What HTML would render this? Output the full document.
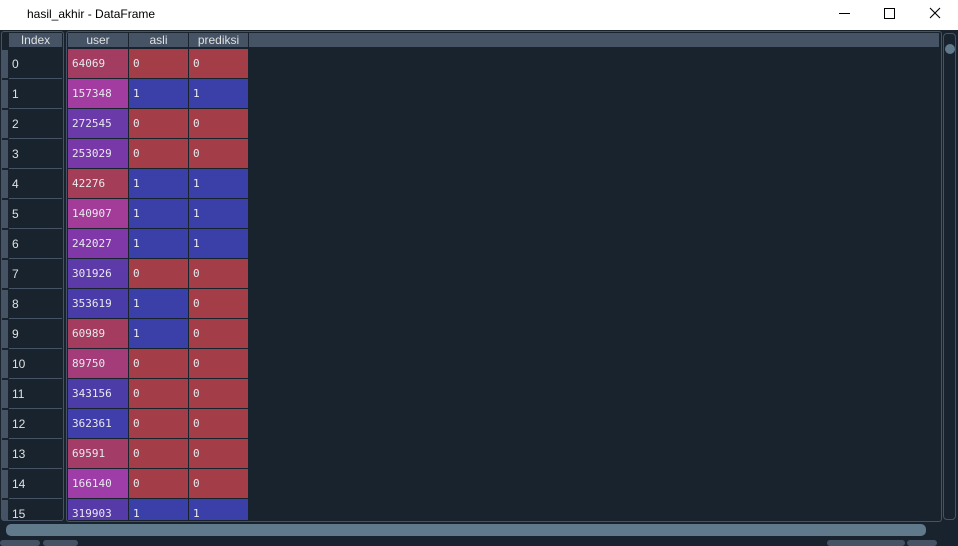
<!DOCTYPE html><html><head><style>
body{margin:0;width:958px;height:546px;background:#19232d;position:relative;overflow:hidden;font-family:"Liberation Sans",sans-serif}
.t{position:absolute;left:0;top:0;width:958px;height:30px;background:#fff}
.t span{position:absolute;left:27px;top:7px;font-size:12px;color:#000}
.a{position:absolute}
.h{position:absolute;top:33px;height:14px;background:#455364;color:#dfe1e2;font-size:12px;text-align:center;line-height:14px}
.c{position:absolute;height:29px;font-family:"DejaVu Sans Mono","Liberation Mono",monospace;font-size:11px;color:#e8e8ee;line-height:29px;padding-left:4px;box-sizing:border-box}
.i{position:absolute;left:9px;width:53px;height:29px;border-bottom:1px solid #455364;color:#dfe1e2;font-size:12px;line-height:30px;padding-left:3px;box-sizing:border-box}
.ib{position:absolute;left:2px;width:6px;height:28px;background:#455364}
</style></head><body>
<div class="t"><span>hasil_akhir - DataFrame</span>
<div class="a" style="left:839px;top:13px;width:11px;height:1px;background:#000"></div>
<div class="a" style="left:884px;top:8px;width:9px;height:9px;border:1px solid #000"></div>
<svg class="a" style="left:929px;top:7px" width="12" height="12"><path d="M1 1L11 11M11 1L1 11" stroke="#000" stroke-width="1.1"/></svg>
</div>
<div class="a" style="left:1px;top:31px;width:63px;height:490px;border:1px solid #455364;border-radius:3px;box-sizing:border-box"></div>
<div class="a" style="left:66px;top:31px;width:876px;height:491px;border:1px solid #455364;border-radius:3px;box-sizing:border-box"></div>
<div class="h" style="left:9px;width:53px">Index</div>
<div class="h" style="left:68px;width:60px">user</div>
<div class="h" style="left:129px;width:59px">asli</div>
<div class="h" style="left:189px;width:59px">prediksi</div>
<div class="h" style="left:249px;width:690px"></div>
<div id="g"></div>
<div class="a" style="left:943px;top:33px;width:13px;height:487px;border:1px solid #455364;border-radius:4px;box-sizing:border-box"></div>
<div class="a" style="left:945px;top:44px;width:10px;height:10px;border-radius:5px;background:#60798b"></div>
<div class="a" style="left:6px;top:524px;width:920px;height:12px;border-radius:5px;background:#60798b"></div>
<div class="a" style="left:0;top:540px;width:40px;height:6px;background:#455364;border-radius:3px"></div>
<div class="a" style="left:43px;top:540px;width:35px;height:6px;background:#455364;border-radius:3px"></div>
<div class="a" style="left:827px;top:540px;width:78px;height:6px;background:#455364;border-radius:3px"></div>
<div class="a" style="left:907px;top:540px;width:30px;height:6px;background:#455364;border-radius:3px"></div>
<script>
var d=[[64069,0,0,'#a23c60'],[157348,1,1,'#a23ca0'],[272545,0,0,'#6a3aa8'],[253029,0,0,'#7838a8'],[42276,1,1,'#a33d58'],[140907,1,1,'#a33c98'],[242027,1,1,'#8038a8'],[301926,0,0,'#5c3aa8'],[353619,1,0,'#4a3ca8'],[60989,1,0,'#a33c5e'],[89750,0,0,'#a33c78'],[343156,0,0,'#4c3ca8'],[362361,0,0,'#403eaa'],[69591,0,0,'#a33c66'],[166140,0,0,'#9e3ca8'],[319903,1,1,'#563aa8']];
var h='';
function col(v){return v?'#3a40a8':'#a33d48'}
d.forEach(function(r,k){var y=49+k*30,hh=k==15?21:29;
h+='<div class="ib" style="top:'+(y+1)+'px;height:'+(hh-1)+'px"></div><div class="i" style="top:'+y+'px;height:'+(hh+1)+'px">'+k+'</div>';
h+='<div class="c" style="left:68px;top:'+y+'px;width:60px;height:'+hh+'px;background:'+r[3]+'">'+r[0]+'</div>';
h+='<div class="c" style="left:129px;top:'+y+'px;width:59px;height:'+hh+'px;background:'+col(r[1])+'">'+r[1]+'</div>';
h+='<div class="c" style="left:189px;top:'+y+'px;width:59px;height:'+hh+'px;background:'+col(r[2])+'">'+r[2]+'</div>';});
document.getElementById('g').innerHTML=h;
</script>
</body></html>
